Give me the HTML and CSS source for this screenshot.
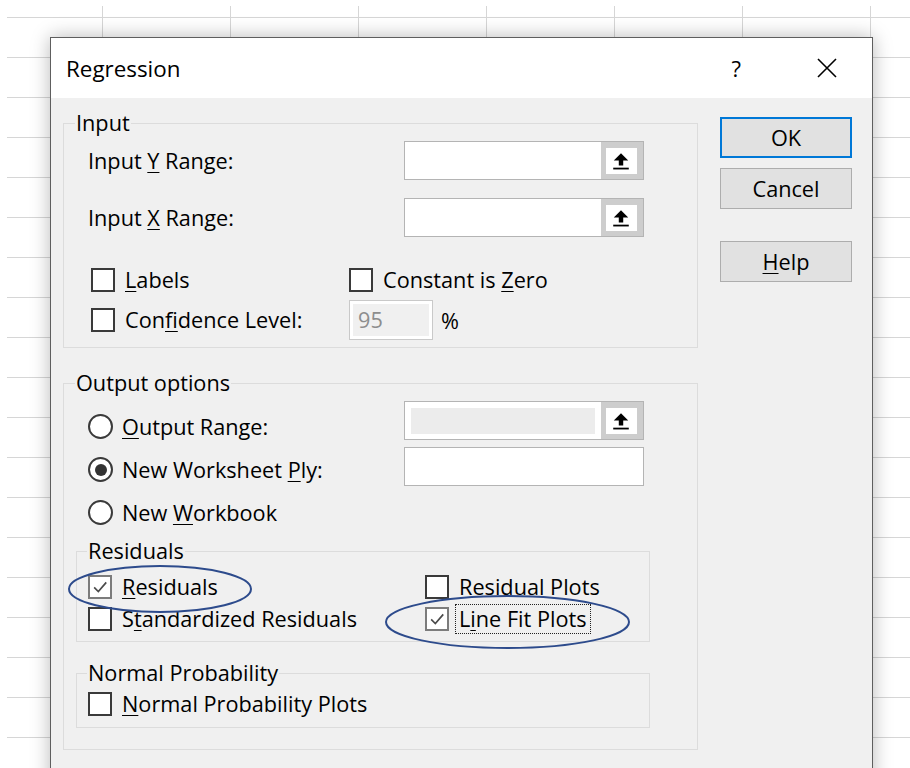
FILE: index.html
```html
<!DOCTYPE html>
<html lang="en">
<head>
<meta charset="utf-8">
<title>Regression</title>
<link rel="stylesheet" href="styles.css">
</head>
<body>
<div class="sheet">
  <div class="dialog" role="dialog" aria-labelledby="dlg-title">
    <header class="titlebar">
      <h1 id="dlg-title" class="title">Regression</h1>
      <span class="help-q">?</span>
      <svg class="close" viewBox="0 0 20 20" aria-label="Close"><path d="M1 1 L19 19 M19 1 L1 19"/></svg>
    </header>

    <div class="dialog-body">
      <div class="main-col">
        <fieldset class="group">
          <legend>Input</legend>
          <div class="range-row first">
            <span class="lbl">Input <u>Y</u> Range:</span>
            <div class="refbox">
              <span class="ref-field"></span>
              <span class="ref-btn"><span class="ref-ico"><svg viewBox="0 0 18 18"><path d="M9 2 L15.5 8.5 H11 V13 H7 V8.5 H2.5 Z"/><rect x="2" y="15" width="14" height="1.6"/></svg></span></span>
            </div>
          </div>
          <div class="range-row second">
            <span class="lbl">Input <u>X</u> Range:</span>
            <div class="refbox">
              <span class="ref-field"></span>
              <span class="ref-btn"><span class="ref-ico"><svg viewBox="0 0 18 18"><path d="M9 2 L15.5 8.5 H11 V13 H7 V8.5 H2.5 Z"/><rect x="2" y="15" width="14" height="1.6"/></svg></span></span>
            </div>
          </div>
          <div class="input-checks">
            <label class="chk"><span class="box"></span><span><u>L</u>abels</span></label>
            <label class="chk"><span class="box"></span><span>Constant is <u>Z</u>ero</span></label>
            <label class="chk"><span class="box"></span><span>Con<u>f</u>idence Level:</span></label>
            <div class="conf">
              <span class="spin">95</span>
              <span>%</span>
            </div>
          </div>
        </fieldset>

        <fieldset class="group output">
          <legend>Output options</legend>
          <div class="out-rows">
            <div class="radios">
              <label class="rad"><span class="radio"></span><span><u>O</u>utput Range:</span></label>
              <label class="rad"><span class="radio on"></span><span>New Worksheet <u>P</u>ly:</span></label>
              <label class="rad"><span class="radio"></span><span>New <u>W</u>orkbook</span></label>
            </div>
            <div class="out-boxes">
              <div class="refbox disabled">
                <span class="ref-field"><span class="ref-fill"></span></span>
                <span class="ref-btn"><span class="ref-ico"><svg viewBox="0 0 18 18"><path d="M9 2 L15.5 8.5 H11 V13 H7 V8.5 H2.5 Z"/><rect x="2" y="15" width="14" height="1.6"/></svg></span></span>
              </div>
              <div class="textbox"></div>
            </div>
          </div>

          <fieldset class="group sub residuals">
            <legend>Residuals</legend>
            <div class="sub-checks">
              <label class="chk"><span class="box checked"><svg viewBox="0 0 24 24"><path d="M5 12.5 L10 17.5 L19.5 6.5"/></svg></span><span><u>R</u>esiduals</span></label>
              <label class="chk"><span class="box"></span><span>Residual Plots</span></label>
              <label class="chk"><span class="box"></span><span>S<u>t</u>andardized Residuals</span></label>
              <label class="chk"><span class="box checked"><svg viewBox="0 0 24 24"><path d="M5 12.5 L10 17.5 L19.5 6.5"/></svg></span><span class="focus">L<u>i</u>ne Fit Plots</span></label>
            </div>
          </fieldset>

          <fieldset class="group sub normal">
            <legend>Normal Probability</legend>
            <div class="sub-checks single">
              <label class="chk"><span class="box"></span><span><u>N</u>ormal Probability Plots</span></label>
            </div>
          </fieldset>
        </fieldset>
      </div>

      <div class="btn-col">
        <button class="btn btn-default" type="button">OK</button>
        <button class="btn btn-cancel" type="button">Cancel</button>
        <button class="btn btn-help" type="button"><u>H</u>elp</button>
      </div>
    </div>
  </div>

  <svg class="marks" viewBox="0 0 910 768" aria-hidden="true">
    <ellipse cx="160" cy="589" rx="91" ry="23"/>
    <ellipse cx="507.5" cy="622" rx="121.5" ry="26"/>
  </svg>
</div>
</body>
</html>
```

FILE: styles.css
```css
* { box-sizing: border-box; }

html, body {
  margin: 0;
  height: 100%;
}

body {
  background: #fff;
  font-family: "Open Sans", "Noto Sans", sans-serif;
  font-size: 21.7px;
  color: #000;
  overflow: hidden;
}

u { text-decoration-thickness: 1px; text-underline-offset: 3px; }

/* spreadsheet behind the dialog */
.sheet {
  position: relative;
  width: 910px;
  height: 768px;
  overflow: hidden;
  padding: 6px 0 0 7px;
  background-image:
    linear-gradient(to bottom, transparent 39px, #d6d6d6 39px),
    linear-gradient(to right, transparent 127px, #d6d6d6 127px);
  background-size: 100% 40px, 128px 100%;
  background-position: 0 12px, 96px 0;
  background-origin: content-box;
  background-clip: content-box;
}

.dialog {
  margin: 31px 0 0 43px;
  width: 823px;
  height: 760px;
  background: #f0f0f0;
  border: 1px solid #5e5e5e;
  box-shadow: 0 0 18px rgba(0, 0, 0, 0.28);
  display: flex;
  flex-direction: column;
}

.titlebar {
  height: 60px;
  flex: none;
  background: #fff;
  display: flex;
  align-items: center;
  padding-left: 15px;
}

.title {
  flex: 1;
  margin: 0;
  font-size: 22.4px;
  font-weight: 400;
}

.help-q {
  font-size: 22px;
  line-height: 1;
}

.close {
  width: 20px;
  height: 20px;
  margin-left: 76px;
  margin-right: 35px;
  fill: none;
  stroke: #000;
  stroke-width: 1.6;
}

.dialog-body {
  display: flex;
  gap: 22px;
  padding: 15px 20px 0 12px;
}

.main-col { width: 635px; flex: none; }

/* group boxes */
.group {
  margin: 0;
  padding: 0 0 7px;
  min-width: 0;
  border: 1px solid #dcdcdc;
}

.group legend {
  margin-left: 11px;
  padding: 0 1px;
  height: 20px;
  line-height: 20px;
}

.range-row {
  display: flex;
  align-items: center;
  height: 39px;
  padding-left: 24px;
}
.range-row.first { margin-top: 8px; }
.range-row.second { margin-top: 18px; }

.lbl { width: 316px; flex: none; }

.refbox {
  width: 240px;
  height: 39px;
  display: flex;
  background: #fff;
  border: 1px solid #b4b4b4;
}

.ref-field { flex: 1; }

.ref-btn {
  width: 42px;
  flex: none;
  background: #cdcdcd;
  display: flex;
  align-items: center;
  justify-content: center;
  padding: 0 2px 0 0;
}

.ref-ico {
  width: 31px;
  height: 26px;
  background: #fff;
  display: flex;
  align-items: center;
  justify-content: center;
}
.ref-ico svg { width: 20px; height: 20px; fill: #000; }

.refbox.disabled .ref-field { padding: 6px 6px 5px; }
.ref-fill { display: block; height: 100%; background: #ececec; }

.textbox {
  width: 240px;
  height: 39px;
  background: #fff;
  border: 1px solid #b4b4b4;
}

/* check boxes */
.input-checks {
  display: grid;
  grid-template-columns: 258px auto;
  grid-template-rows: 26px 40px;
  row-gap: 7px;
  margin-top: 30px;
  padding-left: 27px;
  align-items: center;
}

.chk {
  display: flex;
  align-items: center;
  gap: 10px;
  height: 26px;
  line-height: 26px;
  white-space: nowrap;
}

.box {
  width: 24px;
  height: 24px;
  flex: none;
  background: #fff;
  border: 2px solid #3a3a3a;
}
.box.checked { border-color: #7c7c7c; }
.box svg {
  display: block;
  width: 100%;
  height: 100%;
  fill: none;
  stroke: #4a4a4a;
  stroke-width: 2;
}

.conf {
  display: flex;
  align-items: center;
  gap: 8px;
}

.spin {
  width: 84px;
  height: 40px;
  border: 1px solid #c9c9c9;
  background: #f0f0f0;
  box-shadow: inset 0 0 0 3px #fff;
  color: #8d8d8d;
  padding-left: 8px;
  line-height: 38px;
}

/* output options */
.group.output { margin-top: 25px; padding-bottom: 21px; }

.out-rows { display: flex; }

.radios {
  width: 340px;
  flex: none;
  padding-left: 24px;
  margin-top: 12px;
}

.rad {
  display: flex;
  align-items: center;
  gap: 9px;
  height: 43px;
  white-space: nowrap;
}

.radio {
  width: 25px;
  height: 25px;
  flex: none;
  border-radius: 50%;
  border: 2px solid #3a3a3a;
  background: #fff;
  display: flex;
  align-items: center;
  justify-content: center;
}
.radio.on::after {
  content: "";
  width: 12px;
  height: 12px;
  border-radius: 50%;
  background: #333;
}

.out-boxes {
  display: flex;
  flex-direction: column;
  gap: 7px;
  margin-top: 8px;
}

.group.sub {
  margin: 7px 47px 0 12px;
  padding-bottom: 6px;
}
.group.sub legend { margin-left: 10px; }
.group.normal { margin-top: 21px; padding-bottom: 7px; }

.sub-checks {
  display: grid;
  grid-template-columns: 337px auto;
  grid-auto-rows: 32px;
  align-items: center;
  padding-left: 11px;
  margin-top: 10px;
}
.sub-checks.single { margin-top: 5px; }

.focus {
  border: 1px dotted #222;
  padding: 1px 3px;
  margin-left: -4px;
  line-height: 26px;
}

/* command buttons */
.btn-col {
  width: 132px;
  flex: none;
  display: flex;
  flex-direction: column;
  margin-top: 4px;
}

.btn {
  width: 132px;
  height: 41px;
  padding: 0;
  font: inherit;
  color: #000;
  background: #e1e1e1;
  border: 1px solid #adadad;
}
.btn-default { border: 2px solid #0078d7; }
.btn-cancel { margin-top: 10px; }
.btn-help { margin-top: 32px; }

/* hand-drawn annotation rings */
.marks {
  position: absolute;
  left: 0;
  top: 0;
  width: 910px;
  height: 768px;
  pointer-events: none;
  fill: none;
  stroke: #2d4b8c;
  stroke-width: 2;
}
```
